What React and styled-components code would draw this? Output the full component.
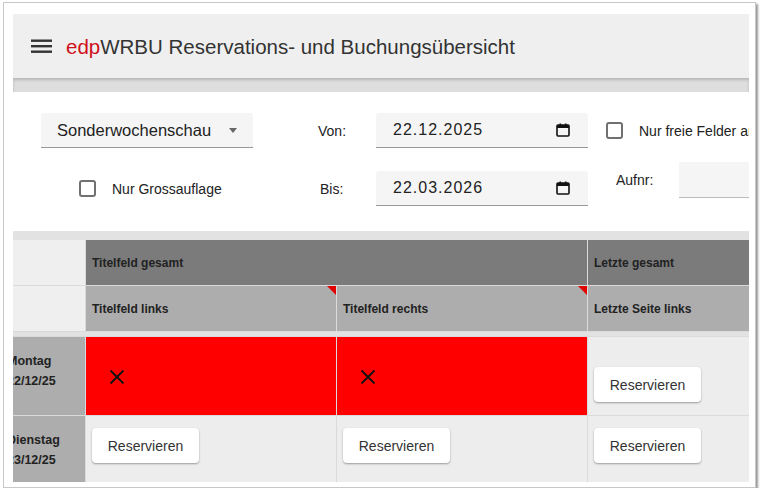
import React from 'react';
import styled, { createGlobalStyle } from 'styled-components';

const GlobalStyle = createGlobalStyle`
  html, body {
    margin: 0;
    padding: 0;
    background: #fff;
    font-family: "Liberation Sans", Arial, sans-serif;
    color: #333;
  }
  * { box-sizing: border-box; }
`;

const Frame = styled.div`
  margin: 2px 0 0 3px;
  width: 753px;
  height: 486px;
  border: 1px solid #c8c8c8;
  box-shadow: 2px 2px 2px rgba(0, 0, 0, 0.4);
  padding: 11px 6px 5px 9px;
  background: #fff;
`;

const Content = styled.div`
  width: 736px;
  height: 468px;
  overflow: hidden;
  display: flex;
  flex-direction: column;
`;

const TopBar = styled.header`
  flex: 0 0 64px;
  background: #efefef;
  display: flex;
  align-items: center;
  padding-left: 18px;
  gap: 14px;
`;

const Title = styled.h1`
  margin: 2px 0 0;
  font-size: 20.5px;
  font-weight: normal;
  color: #333;
  white-space: nowrap;
  span { color: #d0111b; }
`;

const Band = styled.div`
  flex: 0 0 14px;
  background: #dedede;
  box-shadow: inset 0 2px 3px rgba(0, 0, 0, 0.18);
`;

const Filters = styled.div`
  flex: 0 0 139px;
  padding: 21px 0 0 28px;
  display: flex;
  flex-direction: column;
  gap: 23px;
`;

const FilterRow = styled.div`
  display: flex;
  align-items: center;
  height: 35px;
  white-space: nowrap;
  font-size: 14px;
`;

const Select = styled.div`
  flex: 0 0 212px;
  height: 35px;
  background: #f5f5f5;
  border-bottom: 1px solid #999;
  border-radius: 3px 3px 0 0;
  display: flex;
  align-items: center;
  justify-content: space-between;
  padding: 0 16px;
  font-size: 16.5px;
  color: #222;
`;

const Arrow = styled.span`
  width: 0;
  height: 0;
  border-left: 4.5px solid transparent;
  border-right: 4.5px solid transparent;
  border-top: 5px solid #666;
`;

const Label = styled.div`
  flex: 0 0 123px;
  padding-left: ${p => p.$indent}px;
  color: #222;
`;

const DateField = styled.div`
  flex: 0 0 212px;
  height: 35px;
  background: #f5f5f5;
  border-bottom: 1px solid #999;
  border-radius: 3px 3px 0 0;
  display: flex;
  align-items: center;
  justify-content: space-between;
  padding: 0 18px 0 17px;
  font-size: 16px;
  letter-spacing: 1px;
  color: #222;
`;

const CheckGroup = styled.label`
  flex: 0 0 ${p => p.$width || 'auto'};
  display: flex;
  align-items: center;
  gap: 16px;
  padding-left: ${p => p.$offset}px;
  color: #222;
`;

const Box = styled.span`
  flex: 0 0 17px;
  width: 17px;
  height: 17px;
  border: 2px solid #707070;
  border-radius: 3px;
  background: #fff;
`;

const AufnrGroup = styled.div`
  flex: 0 0 auto;
  display: flex;
  align-items: center;
  gap: 26px;
  margin-left: 28px;
  height: 36px;
  align-self: flex-start;
  margin-top: -9px;
  color: #222;
`;

const TextInput = styled.div`
  width: 100px;
  height: 36px;
  background: #f5f5f5;
  border-bottom: 1px solid #bbb;
`;

const Table = styled.div`
  flex: 1;
  background: #e2e2e2;
  padding-top: 9px;
  overflow: hidden;
`;

const Grid = styled.div`
  display: grid;
  grid-template-columns: 72px 250px 250px 250px;
  grid-template-rows: 45px 45px 4px 78px 78px;
  gap: 1px;
  background: #dadada;
`;

const tones = {
  blank: '#efefef',
  dark: '#7b7b7b',
  mid: '#adadad',
};

const HeadCell = styled.div`
  position: relative;
  grid-column: ${p => p.$span || 'auto'};
  background: ${p => tones[p.$tone]};
  display: flex;
  align-items: center;
  padding-left: 6px;
  font-size: 12px;
  font-weight: bold;
  color: #222;
  white-space: nowrap;
`;

const Corner = styled.span`
  position: absolute;
  top: 0;
  right: 0;
  width: 0;
  height: 0;
  border-top: 9px solid #e00000;
  border-left: 9px solid transparent;
`;

const Strip = styled.div`
  grid-column: 1 / -1;
  background: #e2e2e2;
`;

const DayCell = styled.div`
  background: #adadad;
  overflow: hidden;
  padding-top: 14px;
  font-size: 12.5px;
  font-weight: bold;
  line-height: 20px;
  color: #222;
  white-space: nowrap;
  div { margin-left: -6px; }
`;

const SlotCell = styled.div`
  background: ${p => (p.$taken ? '#fe0000' : '#ededed')};
  padding: ${p => p.$top}px 0 0 ${p => (p.$taken ? 19 : 6)}px;
`;

const Button = styled.button`
  width: 107px;
  height: 35px;
  border: none;
  border-radius: 4px;
  background: #fff;
  box-shadow: 0 1px 2px rgba(0, 0, 0, 0.35);
  font-family: "Liberation Sans", Arial, sans-serif;
  font-size: 14px;
  color: #333;
  cursor: pointer;
`;

const MenuIcon = () => (
  <svg width="21" height="15" viewBox="0 0 21 15">
    <rect x="0" y="0.5" width="21" height="2.4" fill="#333" />
    <rect x="0" y="6" width="21" height="2.4" fill="#333" />
    <rect x="0" y="11.5" width="21" height="2.4" fill="#333" />
  </svg>
);

const CalendarIcon = () => (
  <svg width="14" height="14" viewBox="0 0 14 14">
    <rect x="1" y="2" width="12" height="11" rx="1" fill="none" stroke="#111" strokeWidth="1.6" />
    <rect x="1" y="2" width="12" height="3" fill="#111" />
    <rect x="3.5" y="0.5" width="1.6" height="2.5" fill="#111" />
    <rect x="8.9" y="0.5" width="1.6" height="2.5" fill="#111" />
  </svg>
);

const CloseIcon = () => (
  <svg width="24" height="24" viewBox="0 0 24 24">
    <path d="M5.5 5.5 L18.5 18.5 M18.5 5.5 L5.5 18.5" stroke="#111" strokeWidth="1.8" />
  </svg>
);

const days = [
  { name: 'Montag', date: '22/12/25', slots: [true, true, false], top: [28, 28, 30] },
  { name: 'Dienstag', date: '23/12/25', slots: [false, false, false], top: [12, 12, 12] },
];

const App = () => (
  <>
    <GlobalStyle />
    <Frame>
      <Content>
        <TopBar>
          <MenuIcon />
          <Title><span>edp</span>WRBU Reservations- und Buchungsübersicht</Title>
        </TopBar>
        <Band />
        <Filters>
          <FilterRow>
            <Select>Sonderwochenschau<Arrow /></Select>
            <Label $indent={65}>Von:</Label>
            <DateField>22.12.2025<CalendarIcon /></DateField>
            <CheckGroup $offset={18}><Box />Nur freie Felder anzeigen</CheckGroup>
          </FilterRow>
          <FilterRow>
            <CheckGroup $width="212px" $offset={38}><Box />Nur Grossauflage</CheckGroup>
            <Label $indent={67}>Bis:</Label>
            <DateField>22.03.2026<CalendarIcon /></DateField>
            <AufnrGroup>Aufnr:<TextInput /></AufnrGroup>
          </FilterRow>
        </Filters>
        <Table>
          <Grid>
            <HeadCell $tone="blank" />
            <HeadCell $tone="dark" $span="span 2">Titelfeld gesamt</HeadCell>
            <HeadCell $tone="dark">Letzte gesamt</HeadCell>

            <HeadCell $tone="blank" />
            <HeadCell $tone="mid">Titelfeld links<Corner /></HeadCell>
            <HeadCell $tone="mid">Titelfeld rechts<Corner /></HeadCell>
            <HeadCell $tone="mid">Letzte Seite links</HeadCell>

            <Strip />

            {days.map(day => (
              <React.Fragment key={day.name}>
                <DayCell>
                  <div>{day.name}</div>
                  <div>{day.date}</div>
                </DayCell>
                {day.slots.map((taken, i) => (
                  <SlotCell key={i} $taken={taken} $top={day.top[i]}>
                    {taken ? <CloseIcon /> : <Button>Reservieren</Button>}
                  </SlotCell>
                ))}
              </React.Fragment>
            ))}
          </Grid>
        </Table>
      </Content>
    </Frame>
  </>
);

export default App;
